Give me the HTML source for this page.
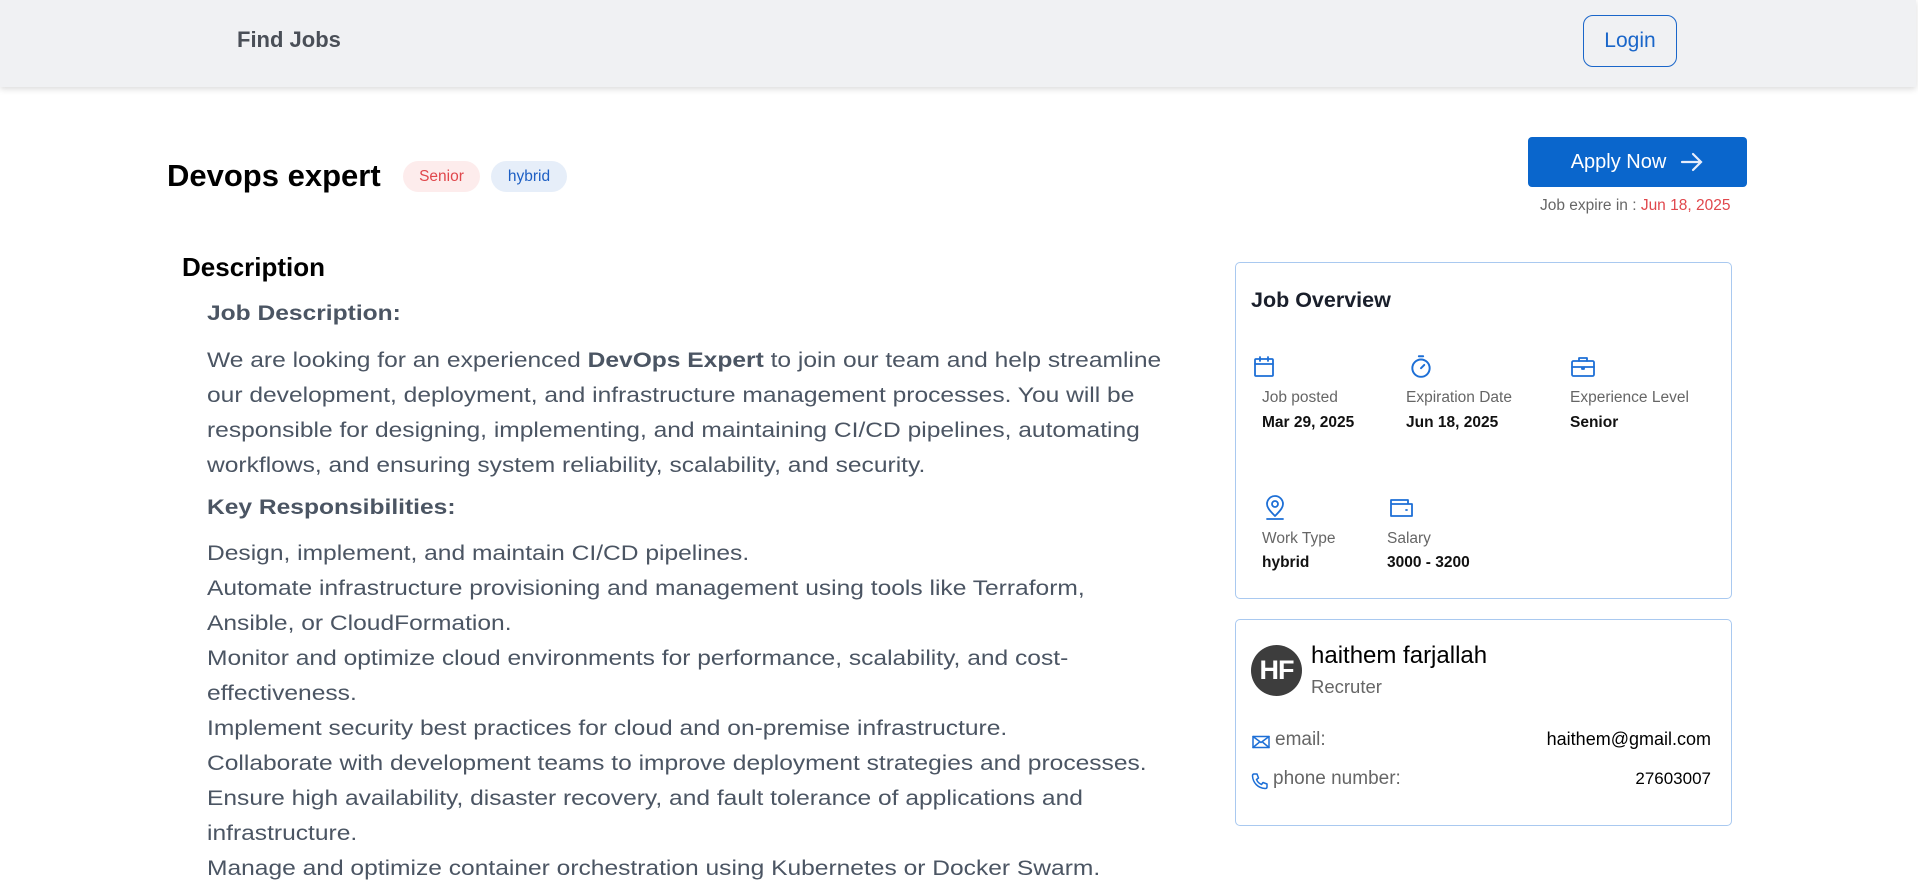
<!DOCTYPE html>
<html><head><meta charset="utf-8"><style>
*{margin:0;padding:0;box-sizing:border-box}
body{width:1918px;height:885px;overflow:hidden;background:#fff;font-family:"Liberation Sans",sans-serif;position:relative;color:#111}
.abs{position:absolute}
header{position:absolute;left:0;top:0;width:1916px;height:87px;background:#f0f1f3;box-shadow:0 2px 6px rgba(0,0,0,.15)}
.login{left:1583px;top:15px;width:94px;height:52px;border:1.5px solid #1a66c9;border-radius:10px;color:#1a66c9;font-size:21px;display:flex;align-items:center;justify-content:center}
.pill{top:161px;height:31px;border-radius:16px;font-size:15.5px;display:flex;align-items:center;justify-content:center}
.desc{left:207px;color:#4b5563;font-size:21px;white-space:nowrap;line-height:35px;transform:scaleX(1.17);transform-origin:0 0}
.card{left:1235px;width:497px;border:1px solid #a9c9f0;border-radius:5px}
.lbl{font-size:15.5px;color:#666}
.val{font-size:15.5px;font-weight:bold;color:#111}
svg.ic{position:absolute;fill:none;stroke:#1d6fd6;stroke-width:1.8;stroke-linecap:round;stroke-linejoin:round}
</style></head><body>
<header>
<div class="abs" style="left:237px;top:27px;font-size:22px;font-weight:bold;color:#4a4f57">Find Jobs</div>
<div class="abs login">Login</div>
</header>

<div class="abs" style="left:167px;top:158px;font-size:31px;font-weight:bold;color:#000">Devops expert</div>
<div class="abs pill" style="left:403px;width:77px;background:#fdecec;color:#e0474c">Senior</div>
<div class="abs pill" style="left:491px;width:76px;background:#e6eef9;color:#1d5fc4">hybrid</div>

<div class="abs" style="left:1528px;top:137px;width:219px;height:50px;background:#0a66cc;border-radius:4px;color:#fff;font-size:20px;display:flex;align-items:center;justify-content:center;gap:14px">Apply Now <svg width="24" height="20" viewBox="0 0 24 20" fill="none" stroke="#e8eefc" stroke-width="2.2" stroke-linecap="round"><path d="M2 10H21M13 2l8 8-8 8"/></svg></div>
<div class="abs" style="left:1540px;top:197px;font-size:15.5px;color:#666">Job expire in : <span style="color:#e0474c">Jun 18, 2025</span></div>

<div class="abs" style="left:182px;top:252px;font-size:26px;font-weight:bold;color:#000">Description</div>
<div class="abs desc" style="top:296px;font-weight:bold">Job Description:</div>
<div class="abs desc" style="top:343px">We are looking for an experienced <b>DevOps Expert</b> to join our team and help streamline<br>our development, deployment, and infrastructure management processes. You will be<br>responsible for designing, implementing, and maintaining CI/CD pipelines, automating<br>workflows, and ensuring system reliability, scalability, and security.</div>
<div class="abs desc" style="top:490px;font-weight:bold">Key Responsibilities:</div>
<div class="abs desc" style="top:536px">Design, implement, and maintain CI/CD pipelines.<br>Automate infrastructure provisioning and management using tools like Terraform,<br>Ansible, or CloudFormation.<br>Monitor and optimize cloud environments for performance, scalability, and cost-<br>effectiveness.<br>Implement security best practices for cloud and on-premise infrastructure.<br>Collaborate with development teams to improve deployment strategies and processes.<br>Ensure high availability, disaster recovery, and fault tolerance of applications and<br>infrastructure.<br>Manage and optimize container orchestration using Kubernetes or Docker Swarm.</div>

<div class="abs card" style="top:262px;height:337px"></div>
<div class="abs" style="left:1251px;top:288px;font-size:21.5px;font-weight:bold;color:#1a1f2b">Job Overview</div>

<svg class="ic" style="left:1252px;top:355px" width="24" height="24" viewBox="0 0 24 24"><rect x="3" y="4" width="18" height="17" rx="1"/><path d="M3 9h18M8 2v4M16 2v4"/></svg>
<div class="abs lbl" style="left:1262px;top:389px">Job posted</div>
<div class="abs val" style="left:1262px;top:414px">Mar 29, 2025</div>

<svg class="ic" style="left:1408px;top:353px" width="26" height="26" viewBox="0 0 24 24"><circle cx="12" cy="14" r="8"/><path d="M10 3h4M12 14l3-3"/></svg>
<div class="abs lbl" style="left:1406px;top:389px">Expiration Date</div>
<div class="abs val" style="left:1406px;top:414px">Jun 18, 2025</div>

<svg class="ic" style="left:1570px;top:355px" width="26" height="24" viewBox="0 0 26 24"><rect x="2" y="6" width="22" height="15" rx="1.5"/><path d="M9 6V3h8v3M2 12h22M12 12v2h2v-2"/></svg>
<div class="abs lbl" style="left:1570px;top:389px">Experience Level</div>
<div class="abs val" style="left:1570px;top:414px">Senior</div>

<svg class="ic" style="left:1263px;top:495px" width="24" height="26" viewBox="0 0 24 26"><path d="M12 21c-5-5-8-8.5-8-12a8 8 0 0 1 16 0c0 3.5-3 7-8 12z"/><circle cx="12" cy="9" r="3"/><path d="M4 24h16"/></svg>
<div class="abs lbl" style="left:1262px;top:530px">Work Type</div>
<div class="abs val" style="left:1262px;top:554px">hybrid</div>

<svg class="ic" style="left:1388px;top:496px" width="26" height="24" viewBox="0 0 26 24"><path d="M3 4h17v4M3 4v16h21V8H3"/><path d="M18 14h1"/></svg>
<div class="abs lbl" style="left:1387px;top:530px">Salary</div>
<div class="abs val" style="left:1387px;top:554px">3000 - 3200</div>

<div class="abs card" style="top:619px;height:207px"></div>
<div class="abs" style="left:1251px;top:645px;width:51px;height:51px;border-radius:50%;background:#3d3d3d;color:#fff;font-weight:bold;font-size:27px;display:flex;align-items:center;justify-content:center;letter-spacing:-1px">HF</div>
<div class="abs" style="left:1311px;top:642px;font-size:24px;color:#000">haithem farjallah</div>
<div class="abs" style="left:1311px;top:676px;font-size:18.5px;color:#666">Recruter</div>

<svg class="ic" style="left:1252px;top:735px;stroke-width:1.5" width="18" height="14" viewBox="0 0 18 14"><rect x="1" y="1.5" width="16" height="11"/><path d="M1 1.5l8 6 8-6M1 12.5l6-5M17 12.5l-6-5"/></svg>
<div class="abs" style="left:1275px;top:729px;font-size:19px;color:#666">email:</div>
<div class="abs" style="right:207px;top:729px;font-size:18px;color:#000">haithem@gmail.com</div>
<svg class="ic" style="left:1251px;top:772px;stroke-width:1.5" width="18" height="18" viewBox="0 0 18 18"><path d="M3 2l3 0 1.5 4-2 1.5c1 2.5 2.5 4 5 5l1.5-2 4 1.5v3c0 1-1 1.5-2 1.5C7 16 2 11 1.5 4c0-1 .5-2 1.5-2z"/></svg>
<div class="abs" style="left:1273px;top:768px;font-size:19px;color:#666">phone number:</div>
<div class="abs" style="right:207px;top:769px;font-size:17px;color:#000">27603007</div>
</body></html>
